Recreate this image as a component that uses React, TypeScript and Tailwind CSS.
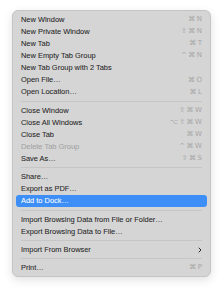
import { ChevronRight } from "lucide-react";

type Item =
  | { sep: true }
  | { label: string; keys?: string[]; disabled?: boolean; active?: boolean; submenu?: boolean; sep?: false };

const items: Item[] = [
  { label: "New Window", keys: ["⌘", "N"] },
  { label: "New Private Window", keys: ["⇧", "⌘", "N"] },
  { label: "New Tab", keys: ["⌘", "T"] },
  { label: "New Empty Tab Group", keys: ["^", "⌘", "N"] },
  { label: "New Tab Group with 2 Tabs" },
  { label: "Open File…", keys: ["⌘", "O"] },
  { label: "Open Location…", keys: ["⌘", "L"] },
  { sep: true },
  { label: "Close Window", keys: ["⇧", "⌘", "W"] },
  { label: "Close All Windows", keys: ["⌥", "⇧", "⌘", "W"] },
  { label: "Close Tab", keys: ["⌘", "W"] },
  { label: "Delete Tab Group", keys: ["^", "⌘", "W"], disabled: true },
  { label: "Save As…", keys: ["⇧", "⌘", "S"] },
  { sep: true },
  { label: "Share…" },
  { label: "Export as PDF…" },
  { label: "Add to Dock…", active: true },
  { sep: true },
  { label: "Import Browsing Data from File or Folder…" },
  { label: "Export Browsing Data to File…" },
  { sep: true },
  { label: "Import From Browser", submenu: true },
  { sep: true },
  { label: "Print…", keys: ["⌘", "P"] },
];

export default function App() {
  return (
    <div className="w-[223px] h-[291px] bg-white pt-[10px] pl-[12px] font-['Liberation_Sans',sans-serif]">
      <div className="w-[199px] rounded-[6px] bg-[#d5d5d5] border border-[#c4c4c4] shadow-[0_3px_10px_rgba(0,0,0,0.12)] py-[2.5px] px-[3px]">
        {items.map((it, i) =>
          it.sep ? (
            <div key={i} className="h-[6.1px] flex items-center px-[5px]">
              <div className="h-px w-full bg-[#c6c6c6]" />
            </div>
          ) : (
            <div
              key={i}
              className={`h-[12.1px] flex items-center justify-between pl-[5px] pr-[5px] rounded-[3px] text-[7.45px] leading-none ${
                it.active ? "bg-[#3d8ef7] text-white" : it.disabled ? "text-[#a3a3a3]" : "text-[#262626]"
              }`}
            >
              <span className="[-webkit-text-stroke:0.06px_currentColor]">{it.label}</span>
              {it.keys && (
                <span className="flex items-center gap-[1.5px] text-[#a6a6a6] font-['DejaVu_Sans',sans-serif] text-[7px]">
                  {it.keys.map((k, j) => (
                    <span key={j}>{k}</span>
                  ))}
                </span>
              )}
              {it.submenu && <ChevronRight className="w-[8px] h-[8px] -mr-[2px] text-[#2a2a2a]" strokeWidth={3} />}
            </div>
          )
        )}
      </div>
    </div>
  );
}
